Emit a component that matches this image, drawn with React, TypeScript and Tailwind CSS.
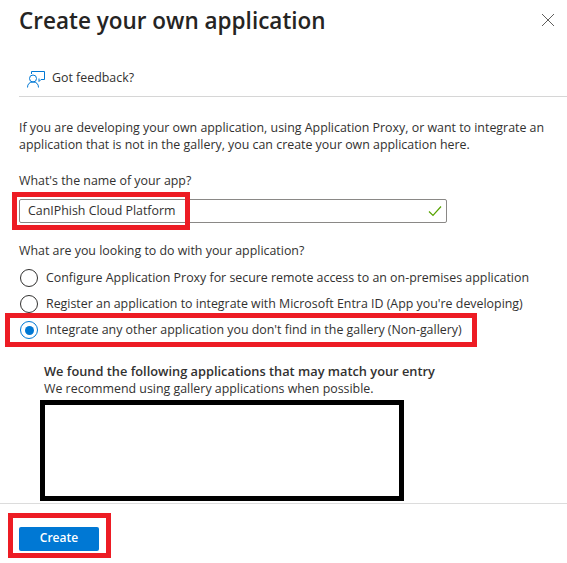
function FeedbackIcon() {
  return (
    <svg width="18" height="17" viewBox="0 0 18 17" fill="none" stroke="#0078d4" strokeWidth="1">
      <path d="M4.5 3V0.5H17.5V8.5H14L12 10.5V7.5" />
      <circle cx="6" cy="7.5" r="3.5" />
      <path d="M0.5 16.5C0.5 13 2.5 11 6 11C9.5 11 11.5 13 11.5 16.5" />
    </svg>
  )
}

function Radio({ label, checked }: { label: string; checked?: boolean }) {
  return (
    <div className="flex items-center h-[26px] pl-[1px]">
      <div className={`w-[18px] h-[18px] rounded-full border flex items-center justify-center ${checked ? 'border-[#0078d4]' : 'border-[#323130]'}`}>
        {checked && <div className="w-[9px] h-[9px] rounded-full bg-[#0078d4]" />}
      </div>
      <span className="ml-[8px] text-[12.4px] leading-[18px] whitespace-nowrap">{label}</span>
    </div>
  )
}

export default function App() {
  return (
    <div className="relative w-[567px] h-[563px] bg-white text-[#323130] overflow-hidden font-['Open_Sans','Noto_Sans',sans-serif]">
      <div className="flex items-start justify-between pl-[19px] pr-[12px] h-[60px]">
        <h1 className="text-[22.5px] leading-[32px] font-semibold mt-[5px] text-[#252423]">Create your own application</h1>
        <svg className="mt-[13px]" width="14" height="14" viewBox="0 0 14 14" stroke="#605e5c" strokeWidth="1">
          <path d="M1 1L13 13M13 1L1 13" />
        </svg>
      </div>

      <div className="ml-[19px] h-[37px] flex items-center border-b border-[#d6d6d6]">
        <div className="ml-[8px] mt-[2px]"><FeedbackIcon /></div>
        <span className="ml-[7px] text-[12.4px] mt-[1px]">Got feedback?</span>
      </div>

      <div className="pl-[19px] pr-[15px] mt-[22px]">
        <p className="text-[12.4px] leading-[17px]">
          If you are developing your own application, using Application Proxy, or want to integrate an application that is not in the gallery, you can create your own application here.
        </p>

        <div className="mt-[19px] text-[12.4px] leading-[18px]">What's the name of your app?</div>
        <div className="mt-[9px] w-[428px] h-[24px] border border-[#8a8886] rounded-[2px] flex items-center justify-between pl-[8px] pr-[4px]">
          <span className="text-[12.4px]">CanIPhish Cloud Platform</span>
          <svg width="14" height="12" viewBox="0 0 14 12" fill="none" stroke="#57a300" strokeWidth="1.2">
            <path d="M1 6.5L5 10.5L13 1.5" />
          </svg>
        </div>

        <div className="mt-[19px] text-[12.4px] leading-[18px]">What are you looking to do with your application?</div>
        <div className="mt-[5px] flex flex-col">
          <Radio label="Configure Application Proxy for secure remote access to an on-premises application" />
          <Radio label="Register an application to integrate with Microsoft Entra ID (App you're developing)" />
          <Radio checked label="Integrate any other application you don't find in the gallery (Non-gallery)" />
        </div>

        <div className="ml-[25px] mt-[20px]">
          <div className="text-[12.8px] leading-[17px] font-semibold">We found the following applications that may match your entry</div>
          <div className="text-[12.4px] leading-[18px]">We recommend using gallery applications when possible.</div>
          <div className="-ml-[4px] mt-[2px] w-[364px] h-[101px] border-[5px] border-black bg-white" />
        </div>
      </div>

      <div className="absolute left-0 right-0 top-[503px] border-t border-[#dcdcdc] pl-[19px] pt-[20px]">
        <button className="w-[80px] h-[24px] pb-[2px] bg-[#0078d4] rounded-[2px] text-white text-[12px] font-semibold">Create</button>
      </div>

      {/* red annotations */}
      <div className="absolute left-[12px] top-[192px] w-[178px] h-[38px] border-[5px] border-[#ed1c24]" />
      <div className="absolute left-[5px] top-[313px] w-[472px] h-[34px] border-[5px] border-[#ed1c24]" />
      <div className="absolute left-[8px] top-[513px] w-[103px] h-[45px] border-[5px] border-[#ed1c24]" />
    </div>
  )
}
